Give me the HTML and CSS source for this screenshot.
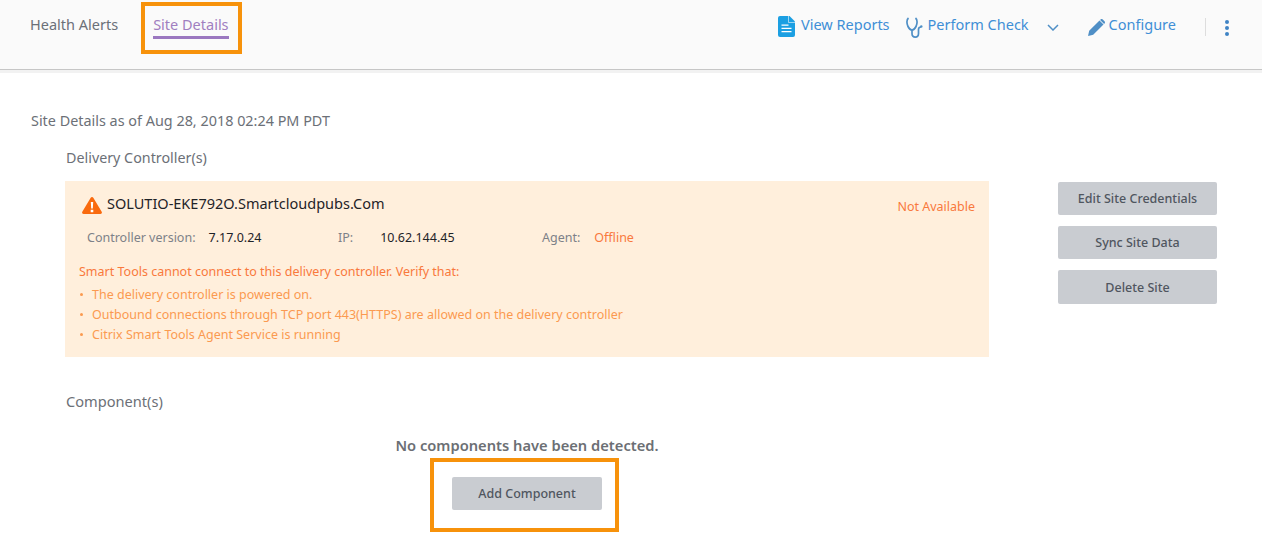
FILE: index.html
```html
<!DOCTYPE html>
<html lang="en">
<head>
    <meta charset="utf-8">
    <meta name="viewport" content="width=device-width, initial-scale=1.0">
    <title>Site Details</title>
    <link rel="stylesheet" href="styles.css">
</head>
<body>
    <header class="topbar">
        <nav class="tabs">
            <a class="tab">Health Alerts</a>
            <div class="callout callout-tab">
                <a class="tab tab-active">Site Details</a>
            </div>
        </nav>
        <div class="actions">
            <a class="action action-reports">
                <svg viewBox="0 0 17 21" width="17" height="21">
                    <path fill="#1b9fe2" d="M2 0h9.500L17 5.500V19a2 2 0 0 1-2 2H2a2 2 0 0 1-2-2V2a2 2 0 0 1 2-2z"/>
                    <path fill="#fff" d="M3.500 8.500h7v1.200h-7zM3.500 11.800h10v1.200h-10zM3.500 15h10v1.200h-10z"/>
                    <path fill="none" stroke="#fff" stroke-width=".8" stroke-opacity=".7" d="M10.500 0v6.500H17"/>
                </svg>
                View Reports
            </a>
            <a class="action action-check">
                <svg viewBox="0 0 17 21" width="17" height="21" fill="none" stroke="#4f8fc6" stroke-width="1.700">
                    <path d="M2.500 1C.5 2.500.5 6.500 2 9.500c1 2 3 3.500 4 3.500s3-1.500 4-3.500c1.500-3 1.500-7-.5-8.500"/>
                    <path d="M6 13v3.500c0 2.500 1.500 3.600 3.300 3.600s3.200-1.100 3.200-3.600v-4c0-1.700.8-2.500 2.500-2.500"/>
                    <circle cx="15.300" cy="9.500" r="1.200" fill="#4f8fc6" stroke="none"/>
                </svg>
                Perform Check
            </a>
            <svg class="chevron" viewBox="0 0 12 7" width="12" height="7" fill="none" stroke="#4f8fc6" stroke-width="1.500">
                <path d="M1 1l5 5 5-5"/>
            </svg>
            <a class="action action-config">
                <svg viewBox="0 0 17 17" width="17" height="17">
                    <path fill="#4f8fc6" d="M0 17l1.200-5.200L11.500 1.500l4 4L5.200 15.800zM12.500.5c.7-.7 1.600-.7 2.300 0l1.700 1.700c.7.7.7 1.600 0 2.300l-.4.400-4-4z"/>
                </svg>
                Configure
            </a>
            <span class="divider"></span>
            <span class="kebab"><i></i><i></i><i></i></span>
        </div>
    </header>
    <div class="band"></div>

    <main class="page">
        <p class="as-of">Site Details as of Aug 28, 2018 02:24 PM PDT</p>
        <h2 class="section-title">Delivery Controller(s)</h2>
        <div class="controller-row">
            <section class="alert-card">
                <div class="card-head">
                    <svg viewBox="0 0 20 17" width="20" height="17">
                        <path fill="#f96a0e" d="M10 0c.6 0 1 .3 1.300.8l8.400 14c.6 1 0 2.200-1.200 2.200H1.500C.3 17-.3 15.800.3 14.800l8.400-14C9 .3 9.400 0 10 0z"/>
                        <path fill="#fff" d="M8.800 5h2.400l-.4 6.500H9.200zM8.700 12.800h2.600v2.400H8.700z"/>
                    </svg>
                    <span class="host">SOLUTIO-EKE792O.Smartcloudpubs.Com</span>
                    <span class="status">Not Available</span>
                </div>
                <div class="meta">
                    <span class="meta-item meta-version"><span class="meta-label">Controller version:</span><span>7.17.0.24</span></span>
                    <span class="meta-item meta-ip"><span class="meta-label">IP:</span><span>10.62.144.45</span></span>
                    <span class="meta-item"><span class="meta-label">Agent:</span><span class="offline">Offline</span></span>
                </div>
                <p class="verify">Smart Tools cannot connect to this delivery controller. Verify that:</p>
                <ul class="checks">
                    <li>The delivery controller is powered on.</li>
                    <li>Outbound connections through TCP port 443(HTTPS) are allowed on the delivery controller</li>
                    <li>Citrix Smart Tools Agent Service is running</li>
                </ul>
            </section>
            <div class="side-buttons">
                <button class="btn btn-side">Edit Site Credentials</button>
                <button class="btn btn-side">Sync Site Data</button>
                <button class="btn btn-side btn-delete">Delete Site</button>
            </div>
        </div>
        <h2 class="section-title section-components">Component(s)</h2>
        <div class="empty">
            <p class="empty-text">No components have been detected.</p>
            <div class="callout callout-add">
                <button class="btn btn-add">Add Component</button>
            </div>
        </div>
    </main>
</body>
</html>
```

FILE: styles.css
```css
body {
    font-family: "Noto Sans", "Open Sans", sans-serif;
    background-color: #fff;
    color: #666;
    margin: 0;
    font-size: 14px;
    overflow: hidden;
}
.topbar {
    display: flex;
    justify-content: space-between;
    height: 69px;
    background-color: #fafafa;
    border-bottom: 1px solid #c6c6c6;
}
.band {
    height: 3px;
    background-color: #f2f2f2;
}
.tabs {
    display: flex;
    align-items: flex-start;
    padding-left: 30px;
}
.tab {
    color: #6b7078;
    font-size: 14.5px;
    line-height: 20px;
    margin-top: 14px;
}
.callout {
    border: 4px solid #f7920b;
    box-sizing: border-box;
}
.callout-tab {
    width: 101px;
    height: 52px;
    margin: 2px 0 0 23px;
    padding: 0 9px 0 8px;
}
.tab-active {
    display: block;
    margin-top: 8px;
    color: #a07fc0;
    border-bottom: 3px solid #9b78c0;
    padding-bottom: 2px;
    white-space: nowrap;
}
.actions {
    display: flex;
    align-items: flex-start;
    padding-top: 14px;
    padding-right: 33px;
}
.action {
    display: flex;
    align-items: flex-start;
    color: #3f8fd6;
    font-size: 14.5px;
    line-height: 20px;
    white-space: nowrap;
}
.action svg {
    margin-top: 2px;
}
.action-reports svg {
    margin-right: 6px;
}
.action-check {
    margin-left: 16px;
}
.action-check svg {
    margin-right: 5px;
    margin-top: 3px;
}
.chevron {
    margin: 10px 0 0 18px;
}
.action-config {
    margin-left: 29px;
}
.action-config svg {
    margin: 5px 4px 0 0;
}
.divider {
    width: 1px;
    height: 18px;
    margin: 4px 0 0 29px;
    background-color: #ddd;
}
.kebab {
    display: flex;
    flex-direction: column;
    gap: 2px;
    margin: 6px 0 0 19px;
}
.kebab i {
    display: block;
    width: 4px;
    height: 4px;
    border-radius: 50%;
    background-color: #3f83c4;
}
.page {
    padding-left: 31px;
}
.as-of {
    margin: 38px 0 0;
    line-height: 20px;
    color: #6c7077;
    font-size: 14.4px;
}
.section-title {
    margin: 17px 0 0 35px;
    font-size: 14.3px;
    font-weight: 400;
    line-height: 20px;
    color: #6c7077;
}
.controller-row {
    display: flex;
    align-items: flex-start;
    margin: 13px 0 0 34px;
}
.alert-card {
    width: 924px;
    height: 176px;
    background-color: #ffefdc;
    box-sizing: border-box;
    padding: 12px 14px 0;
}
.card-head {
    display: flex;
    align-items: flex-start;
    padding-left: 3px;
}
.card-head svg {
    margin-top: 4px;
}
.host {
    margin-left: 5px;
    color: #1f2328;
    font-size: 14.5px;
    line-height: 20px;
}
.status {
    margin-left: auto;
    margin-top: 5px;
    color: #f9793c;
    font-size: 12.5px;
    line-height: 18px;
}
.meta {
    display: flex;
    margin-top: 13px;
    padding-left: 8px;
    font-size: 12.5px;
    line-height: 18px;
    color: #1f2328;
}
.meta-label {
    color: #7d8188;
    margin-right: 14px;
}
.meta-version {
    width: 251px;
}
.meta-version .meta-label {
    margin-right: 13px;
}
.meta-ip {
    width: 204px;
}
.meta-ip .meta-label {
    margin-right: 27px;
}
.offline {
    color: #f9793c;
}
.verify {
    margin: 16px 0 0;
    font-size: 12.5px;
    line-height: 18px;
    color: #f9793c;
}
.checks {
    list-style: none;
    margin: 4px 0 0;
    padding: 0;
    font-size: 12.5px;
    line-height: 20px;
    color: #fb9a50;
}
.checks li {
    padding-left: 13px;
    position: relative;
}
.checks li::before {
    content: "";
    position: absolute;
    left: 1px;
    top: 8px;
    width: 3px;
    height: 3px;
    border-radius: 50%;
    background-color: #fb9a50;
}
.side-buttons {
    display: flex;
    flex-direction: column;
    gap: 11px;
    margin: 1px 0 0 69px;
}
.btn {
    background-color: #c9ccd1;
    color: #50565f;
    border: none;
    border-radius: 2px;
    font-family: inherit;
    font-size: 12.5px;
    font-weight: 500;
    cursor: pointer;
}
.btn-side {
    width: 159px;
    height: 33px;
}
.btn-delete {
    height: 34px;
}
.section-components {
    margin-top: 34px;
    font-size: 14.6px;
}
.empty {
    display: flex;
    flex-direction: column;
    align-items: center;
    width: 992px;
}
.empty-text {
    margin: 24px 0 0;
    font-size: 14.7px;
    font-weight: 600;
    line-height: 20px;
    color: #6c6f74;
}
.callout-add {
    display: flex;
    justify-content: center;
    align-items: center;
    width: 189px;
    height: 74px;
    margin: 3px 5px 0 0;
    padding: 0 0 3px 5px;
}
.btn-add {
    width: 150px;
    height: 33px;
}
```
